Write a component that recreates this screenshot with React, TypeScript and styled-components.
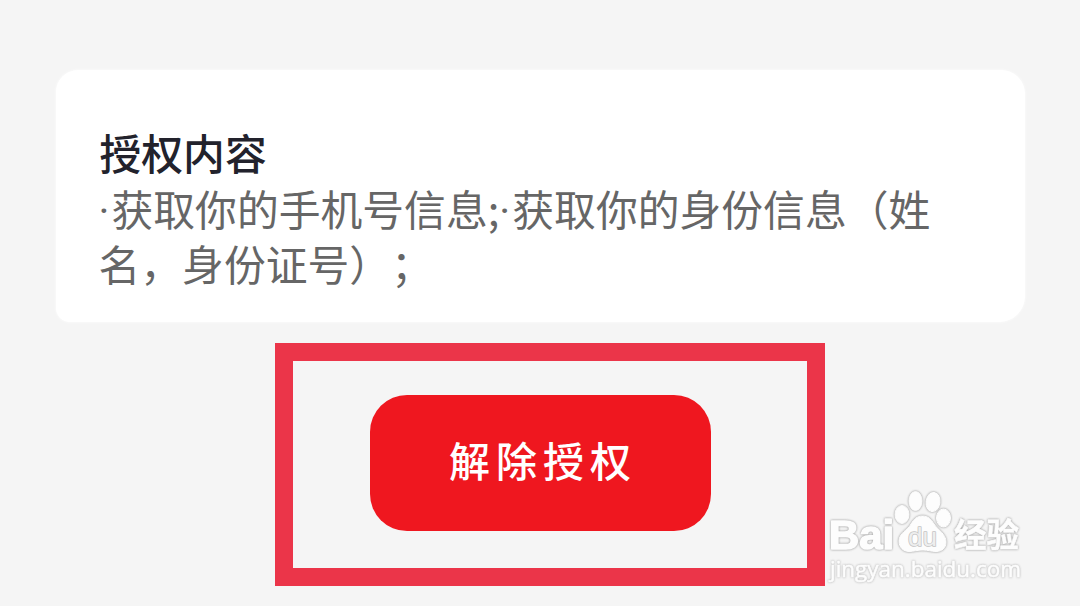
import React from "react";
import styled, { createGlobalStyle } from "styled-components";

const GlobalStyle = createGlobalStyle`
  body {
    margin: 0;
    background-color: #f5f5f5;
    font-family: "Noto Sans CJK SC", sans-serif;
  }
`;

const Page = styled.main`
  box-sizing: border-box;
  position: relative;
  display: flex;
  flex-flow: column;
  align-items: center;
  gap: 21px;
  width: 1080px;
  height: 606px;
  padding-top: 70px;
  overflow: hidden;
  background-color: #f5f5f5;
`;

const PermissionCard = styled.section`
  box-sizing: border-box;
  width: 969px;
  height: 252px;
  padding: 53px 44px 0;
  border-radius: 22px 24px 26px 14px;
  background-color: white;
  box-shadow: 0 0 3px rgba(255, 255, 255, 0.9);
`;

const CardTitle = styled.h1`
  margin: 0;
  color: #22222c;
  font-size: 41.8px;
  font-weight: 500;
  line-height: 58px;
`;

const CardText = styled.p`
  margin: 0 0 0 -1px;
  color: #666;
  font-size: 41.8px;
  font-weight: 400;
  line-height: 55px;
  white-space: nowrap;
  text-spacing-trim: space-all;
`;

const Dot = styled.span`
  display: inline-block;
  width: 13px;
  font-family: "Roboto", sans-serif;
  line-height: 1;
`;

const Highlight = styled.div`
  box-sizing: border-box;
  display: flex;
  align-items: center;
  justify-content: center;
  width: 550px;
  height: 243px;
  margin-left: 20px;
  padding-bottom: 3px;
  border: 18px solid #eb3549;
`;

const RevokeButton = styled.button`
  width: 341px;
  height: 136px;
  margin-right: 20px;
  padding: 0 0 8px 6px;
  border: none;
  border-radius: 37px;
  background-color: #ef171f;
  color: white;
  font-family: inherit;
  font-size: 41px;
  font-weight: 500;
  letter-spacing: 6px;
`;

const WatermarkSvg = styled.svg`
  position: absolute;
  left: 822px;
  top: 484px;
  fill: #fdfdfd;
  stroke: #fdfdfd;
  stroke-width: 1px;
  stroke-linejoin: round;
`;

const Outlined = styled.g<{ $shade: string }>`
  filter: drop-shadow(0 0 0.8px ${({ $shade }) => $shade})
    drop-shadow(0 0 0.5px #ddd);
`;

const Watermark = () => (
  <WatermarkSvg width="210" height="106" viewBox="0 0 210 106">
    <Outlined $shade="#9c9c9c">
      <text
        x="7"
        y="65"
        fontFamily="Liberation Sans, sans-serif"
        fontWeight="700"
        fontSize="41"
        textLength="65"
        lengthAdjust="spacingAndGlyphs"
        strokeWidth="1.6"
      >
        Bai
      </text>
      <ellipse cx="80" cy="30.500" rx="7" ry="9" />
      <ellipse cx="93.500" cy="17" rx="6.500" ry="9.500" />
      <ellipse cx="111" cy="18" rx="7" ry="9.500" transform="rotate(8 111 18)" />
      <ellipse cx="121.500" cy="34" rx="7" ry="9" />
      <path d="M100.500 32C106 32 109 35 112 40C116 46 124 50 124 58C124 64 120 67.500 114 67.500C109 67.500 106 66 101 66C95 66 92 67.500 87 67.500C81 67.500 77 63 77 57C77 49 86 46 89 40C92 35 95 32 100.500 32Z" />
      <text
        x="132"
        y="63"
        fontFamily="Noto Sans CJK SC, sans-serif"
        fontWeight="700"
        fontSize="32.5"
        strokeWidth="0.6"
      >
        经验
      </text>
    </Outlined>
    <text
      x="86"
      y="61.5"
      fontFamily="Liberation Sans, sans-serif"
      fontSize="25"
      textLength="29"
      lengthAdjust="spacingAndGlyphs"
      fill="#eeeeee"
      stroke="#c4c4c4"
      strokeWidth="1.5"
      paintOrder="stroke"
    >
      du
    </text>
    <Outlined $shade="#bbb">
      <text
        x="8"
        y="93"
        fontFamily="Open Sans, sans-serif"
        fontSize="22"
        textLength="191"
        lengthAdjust="spacingAndGlyphs"
        strokeWidth="0.6"
      >
        jingyan.baidu.com
      </text>
    </Outlined>
  </WatermarkSvg>
);

const App = () => {
  return (
    <>
      <GlobalStyle />
      <Page>
        <PermissionCard>
          <CardTitle>授权内容</CardTitle>
          <CardText>
            <Dot>·</Dot>获取你的手机号信息;<Dot>·</Dot>获取你的身份信息（姓
            <br />
            名，身份证号）；
          </CardText>
        </PermissionCard>
        <Highlight>
          <RevokeButton type="button">解除授权</RevokeButton>
        </Highlight>
        <Watermark />
      </Page>
    </>
  );
};

export default App;
